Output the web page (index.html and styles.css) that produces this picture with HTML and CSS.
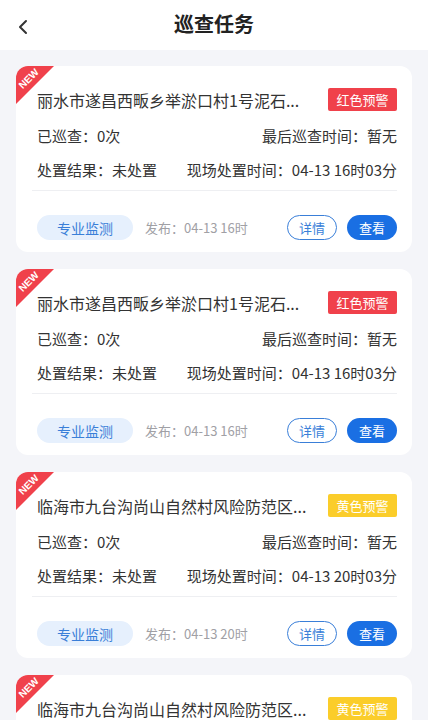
FILE: index.html
```html
<!DOCTYPE html>
<html lang="zh">
<head>
<meta charset="utf-8">
<title>巡查任务</title>
<link rel="stylesheet" href="styles.css">
</head>
<body>
<header class="topbar">
  <span class="back"><svg width="12" height="16" viewBox="0 0 12 16"><path d="M9 2 L3 8 L9 14" fill="none" stroke="#333" stroke-width="2" stroke-linecap="round" stroke-linejoin="round"/></svg></span>
  <h1 class="title">巡查任务</h1>
</header>
<main class="list">
  <section class="card">
    <div class="ribbon"><span>NEW</span></div>
    <div class="row head">
      <span class="name">丽水市遂昌西畈乡举淤口村1号泥石...</span>
      <span class="badge red">红色预警</span>
    </div>
    <div class="row info"><span>已巡查：0次</span><span>最后巡查时间：暂无</span></div>
    <div class="row info"><span>处置结果：未处置</span><span>现场处置时间：04-13 16时03分</span></div>
    <div class="divider"></div>
    <div class="row foot">
      <span class="tag">专业监测</span>
      <span class="pub">发布：04-13 16时</span>
      <span class="btns"><span class="btn outline">详情</span><span class="btn solid">查看</span></span>
    </div>
  </section>
  <section class="card">
    <div class="ribbon"><span>NEW</span></div>
    <div class="row head">
      <span class="name">丽水市遂昌西畈乡举淤口村1号泥石...</span>
      <span class="badge red">红色预警</span>
    </div>
    <div class="row info"><span>已巡查：0次</span><span>最后巡查时间：暂无</span></div>
    <div class="row info"><span>处置结果：未处置</span><span>现场处置时间：04-13 16时03分</span></div>
    <div class="divider"></div>
    <div class="row foot">
      <span class="tag">专业监测</span>
      <span class="pub">发布：04-13 16时</span>
      <span class="btns"><span class="btn outline">详情</span><span class="btn solid">查看</span></span>
    </div>
  </section>
  <section class="card">
    <div class="ribbon"><span>NEW</span></div>
    <div class="row head">
      <span class="name">临海市九台沟尚山自然村风险防范区...</span>
      <span class="badge yellow">黄色预警</span>
    </div>
    <div class="row info"><span>已巡查：0次</span><span>最后巡查时间：暂无</span></div>
    <div class="row info"><span>处置结果：未处置</span><span>现场处置时间：04-13 20时03分</span></div>
    <div class="divider"></div>
    <div class="row foot">
      <span class="tag">专业监测</span>
      <span class="pub">发布：04-13 20时</span>
      <span class="btns"><span class="btn outline">详情</span><span class="btn solid">查看</span></span>
    </div>
  </section>
  <section class="card">
    <div class="ribbon"><span>NEW</span></div>
    <div class="row head">
      <span class="name">临海市九台沟尚山自然村风险防范区...</span>
      <span class="badge yellow">黄色预警</span>
    </div>
    <div class="row info"><span>已巡查：0次</span><span>最后巡查时间：暂无</span></div>
    <div class="row info"><span>处置结果：未处置</span><span>现场处置时间：04-13 20时03分</span></div>
    <div class="divider"></div>
    <div class="row foot">
      <span class="tag">专业监测</span>
      <span class="pub">发布：04-13 20时</span>
      <span class="btns"><span class="btn outline">详情</span><span class="btn solid">查看</span></span>
    </div>
  </section>
</main>
</body>
</html>
```

FILE: styles.css
```css
* { box-sizing: border-box; }
html, body { margin: 0; padding: 0; }
body {
  background: #f4f5f9;
  font-family: "Noto Sans CJK SC", "Noto Sans", sans-serif;
  color: #333;
  height: 720px;
  overflow: hidden;
}
.topbar {
  height: 50px;
  background: #fff;
  display: flex;
  align-items: center;
  justify-content: center;
  position: relative;
}
.back {
  position: absolute;
  left: 17px;
  top: 19px;
  display: flex;
}
.title {
  margin: 0;
  font-size: 20px;
  font-weight: 700;
  color: #222;
  line-height: 28px;
  margin-top: -2px;
}
.list {
  padding: 16px 16px 0;
  display: flex;
  flex-direction: column;
  gap: 17px;
}
.card {
  position: relative;
  overflow: hidden;
  background: #fff;
  border-radius: 12px;
  padding: 22px 15px 12px 21px;
}
.ribbon {
  position: absolute;
  left: 0;
  top: 0;
  width: 38px;
  height: 38px;
  background: #f0414b;
  clip-path: polygon(0 0, 100% 0, 0 100%);
}
.ribbon span {
  position: absolute;
  left: -2px;
  top: 7px;
  width: 30px;
  text-align: center;
  transform: rotate(-45deg);
  color: #fff;
  font-family: "Liberation Sans", sans-serif;
  font-weight: 700;
  font-size: 10px;
  line-height: 12px;
}
.row {
  display: flex;
  align-items: center;
  justify-content: space-between;
}
.head { height: 23px; }
.name {
  font-size: 16px;
  color: #333;
  white-space: nowrap;
}
.badge {
  width: 69px;
  height: 23px;
  border-radius: 2px;
  color: #fff;
  font-size: 13px;
  display: flex;
  align-items: center;
  justify-content: center;
}
.badge.red { background: #f0414b; }
.badge.yellow { background: #fbcd2a; }
.info {
  font-size: 15px;
  line-height: 20px;
  color: #333;
  margin-top: 14px;
}
.head + .info { margin-top: 15px; }
.divider {
  height: 1px;
  background: #eeeff2;
  margin: 10px 0 0 -5px;
}
.foot {
  margin-top: 24px;
  height: 25px;
  justify-content: flex-start;
}
.tag {
  width: 96px;
  height: 25px;
  border-radius: 13px;
  background: #e6f0fd;
  color: #3a7fd8;
  font-size: 14px;
  display: flex;
  align-items: center;
  justify-content: center;
}
.pub {
  margin-left: 12px;
  font-size: 13px;
  color: #a0a0a5;
}
.btns {
  margin-left: auto;
  display: flex;
  gap: 10px;
}
.btn {
  width: 50px;
  height: 25px;
  border-radius: 13px;
  font-size: 13px;
  display: flex;
  align-items: center;
  justify-content: center;
}
.btn.outline {
  border: 1.5px solid #3a7fd8;
  color: #3a7fd8;
  background: #fff;
}
.btn.solid {
  background: #1a6fe3;
  color: #fff;
}
```
